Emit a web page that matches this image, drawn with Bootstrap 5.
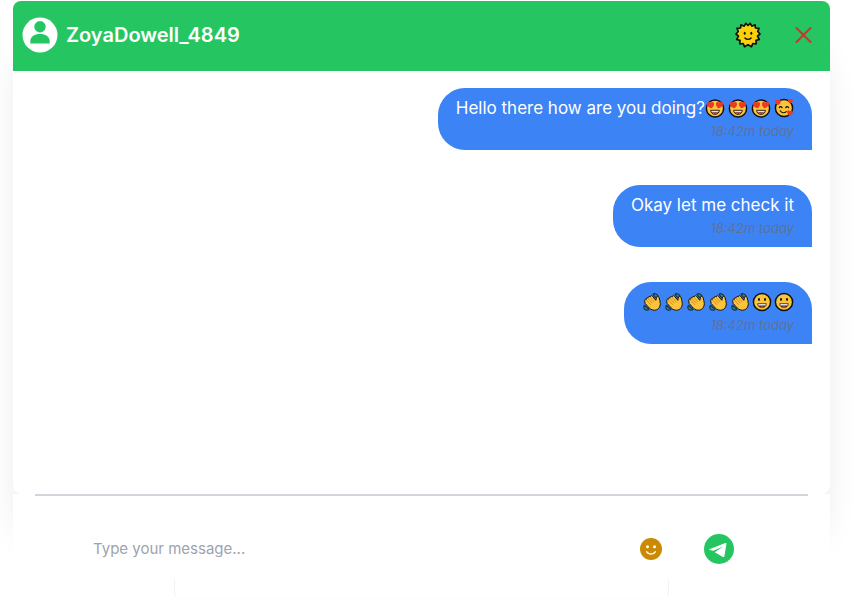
<!DOCTYPE html>
<html lang="en">
<head>
<meta charset="utf-8">
<meta name="viewport" content="width=device-width, initial-scale=1">
<title>Chat</title>
<link href="https://cdn.jsdelivr.net/npm/bootstrap@5.3.0/dist/css/bootstrap.min.css" rel="stylesheet">
<style>
body { font-family: Inter, sans-serif; background: #fff; }
svg { display: block; flex: none; }
.page-wrap { padding: 1px 23px 0 13px; }
.chat-card { border-radius: 8px; box-shadow: 0 48px 36px -14px rgba(0,0,0,.17); background: #fff; }
.chat-head { background: #25c661; height: 70px; padding: 0 18px 2px 9px; border-radius: 8px 8px 0 0; }
.chat-name { font-size: 20px; line-height: 28px; font-weight: 600; color: #fff; }
.icon-btn { background: none; border: 0; padding: 0; }
.head-tools { gap: 34px; }
.messages { min-height: 423px; padding: 17px 18px; gap: 35px; }
.bubble { background: #3c83f6; color: #fff; border-radius: 27px 27px 0 27px; padding: 6px 18px 9px; }
.bubble-text { font-size: 17px; line-height: 28px; min-height: 28px; }
.bubble-time { font-size: 13px; line-height: 19px; font-style: italic; color: #5d7399; }
.faces { gap: 3px; }
.hands { gap: 2px; }
.composer { position: relative; background: #fff; padding: 0 22px; }
.composer-row { border-top: 2px solid #d1d5db; min-height: 86px; padding: 22px 74px 0 58px; }
.composer-input { border: 0; outline: 0; background: transparent; font-size: 15px; line-height: 24px; padding: 0; min-width: 0; }
.composer-input::placeholder { color: #9ca3af; opacity: 1; }
.composer-tools { gap: 42px; }
.lower-panel { position: relative; background: #fff; width: 495px; max-width: 80%; height: 19px; margin-left: 161px; border: 1px solid #f2f2f2; border-top: 0; border-bottom-color: #fcfcfc; border-radius: 0 0 6px 6px; }
</style>
<script src="https://cdn.jsdelivr.net/npm/bootstrap@5.3.0/dist/js/bootstrap.bundle.min.js"></script>
</head>
<body>
<svg width="0" height="0" class="position-absolute" aria-hidden="true">
  <defs>
    <symbol id="love" viewBox="0 0 20 20">
      <circle cx="10" cy="10.500" r="8.600" fill="#fcc43a" stroke="#111" stroke-width="1.500"/>
      <path d="M6.300 10.300C3.200 9.200 1.400 6.800 2 4.900c.6-1.500 2.600-1.400 3.400.1 1.100-1.500 3.300-1.200 3.600.5.300 1.800-.8 3.900-2.700 4.800z" fill="#ea3b22"/>
      <path d="M13.700 10.300c3.100-1.100 4.900-3.500 4.300-5.400-.6-1.500-2.600-1.400-3.400.1-1.100-1.500-3.300-1.200-3.600.5-.3 1.800.8 3.900 2.700 4.800z" fill="#ea3b22"/>
      <path d="M5.600 12.300h8.800c-.2 2.400-1.900 4.100-4.400 4.100s-4.200-1.700-4.400-4.100z" fill="#e8e0dc" stroke="#3a2418" stroke-width="1"/><path d="M6.700 14.300h6.600c-1.400 2-5.200 2-6.600 0z" fill="#7b3026"/>
    </symbol>
    <symbol id="adore" viewBox="0 0 20 20">
      <circle cx="10" cy="10" r="8.600" fill="#fcc43a" stroke="#111" stroke-width="1.500"/>
      <path d="M5.200 9.700c.6-1.400 2.300-1.400 2.900 0M11.700 9.700c.6-1.400 2.300-1.400 2.900 0M6.200 12.800c1.400 2.300 4.200 2.600 6.100.8" fill="none" stroke="#111" stroke-width="1.200" stroke-linecap="round"/>
      <path d="M3.800 7C1.600 5.800.2 3.700 1.200 2.400c.8-1 2-.8 2.600.2.900-1.200 2.600-.9 2.900.3.300 1.600-1.200 3.400-2.900 4.100zM16.500 5.200c-1.900-.8-3-2.300-2.400-3.500.5-1 1.700-.9 2.300.1.700-1.100 2.200-.9 2.500.2.300 1.300-.9 2.700-2.400 3.200zM15.700 17.500c-2.200-1.100-3.200-3.200-2.400-4.500.6-1 1.900-.8 2.500.3.800-1.200 2.600-.9 2.900.4.200 1.600-1.300 3.100-3 3.800z" fill="#ea3b22"/>
    </symbol>
    <symbol id="grin" viewBox="0 0 20 20">
      <circle cx="10" cy="10" r="8.600" fill="#fcc43a" stroke="#111" stroke-width="1.500"/>
      <ellipse cx="7" cy="7.500" rx="1" ry="1.400" fill="#111"/><ellipse cx="13" cy="7.500" rx="1" ry="1.400" fill="#111"/>
      <path d="M5.700 11.700h8.600c-.2 2.500-1.900 4-4.300 4s-4.100-1.500-4.300-4z" fill="#fff" stroke="#222" stroke-width=".8"/><path d="M6.200 13.600h7.600c-1.300 2.600-6.300 2.600-7.600 0z" fill="#222"/><path d="M8 15c1.200-1 2.800-1 4 0-1 .7-3 .7-4 0z" fill="#ea5a47"/>
    </symbol>
    <symbol id="wave" viewBox="0 0 20 20">
      <path d="M11 2.300c1.700-1.300 4.200-.2 5.200 2.200l.4 2.200-3.300-1.400zM2.500 13.300c-1.300 1.500-.8 4.200 1.600 4.800 1.100.3 2.100 0 2.900-.7l-3-2.700z" fill="#3b8396" stroke="#17333f" stroke-width="1.200" stroke-linejoin="round"/>
      <path d="M2.800 9c-.7-1.100.5-2.200 1.500-1.400-.6-1.300.8-2.400 1.800-1.500-.3-1.400 1.100-2.200 2.100-1.200 0-1.300 1.500-1.700 2.300-.6l3.300 4c.7-1 .3-2.300.7-3.300.6-1.100 2.200-.9 2.500.5.400 2 1.300 3.600 1.300 6 0 3.900-2.300 6.700-6 6.700-2.800 0-4.700-1.500-6.200-3.500L3 11.300z" fill="#fcc43a" stroke="#111" stroke-width="1" stroke-linejoin="round"/>
      <path d="M4.500 8l4 4.500M6.200 6.600l4 4.400M8.300 5.500l3.700 4.200" fill="none" stroke="#c07a20" stroke-width=".7" stroke-linecap="round"/>
    </symbol>
  </defs>
</svg>
<div class="page-wrap">
  <main class="chat-card">
    <header class="chat-head d-flex align-items-center justify-content-between">
      <div class="d-flex align-items-center gap-2">
        <svg width="36" height="36" viewBox="0 0 36 36" aria-hidden="true"><circle cx="18" cy="18" r="17.500" fill="#fff"/><circle cx="18" cy="9.700" r="5.700" fill="#25c661"/><path d="M8.300 26.500v-2c0-5 4-7.500 9.700-7.500s9.700 2.500 9.700 7.500v2z" fill="#25c661"/></svg>
        <h1 class="chat-name mb-0">ZoyaDowell_4849</h1>
      </div>
      <div class="head-tools d-flex align-items-center">
        <button type="button" class="icon-btn" aria-label="Light theme">
          <svg width="26" height="26" viewBox="0 0 26 26"><path d="M13 3.500L15.200 1.300 16.800 4.200 20.100 2.800 20.400 6 24 6.400 22.700 9.500 25 12 22.500 14.200 24.300 17.500 21 18.400 21.200 22 17.800 21.500 16.500 24.800 13 22.600 9.500 24.800 8.200 21.500 4.800 22 5 18.400 1.700 17.500 3.500 14.200 1 12 3.300 9.500 2 6.400 5.600 6 5.900 2.800 9.200 4.200 10.800 1.300z" fill="#fad40a" stroke="#111" stroke-width="1.700" stroke-linejoin="round"/><circle cx="13" cy="13" r="7.200" fill="#fdcf0a"/><ellipse cx="9.700" cy="11.300" rx="1" ry="1.500" fill="#111"/><ellipse cx="16.300" cy="11.300" rx="1" ry="1.500" fill="#111"/><path d="M9.900 16c1.600 1.800 4.600 1.800 6.200 0" fill="none" stroke="#111" stroke-width="1.400" stroke-linecap="round"/></svg>
        </button>
        <button type="button" class="icon-btn" aria-label="Close chat">
          <svg width="17" height="18" viewBox="0 0 17 18"><path d="M1.500 2l14 14M15.500 2l-14 14" stroke="#c0392b" stroke-width="2" stroke-linecap="round"/></svg>
        </button>
      </div>
    </header>
    <section class="messages d-flex flex-column align-items-end">
      <article class="bubble">
        <div class="bubble-text d-flex align-items-center">Hello there how are you doing?
          <span class="faces d-flex" role="img" aria-label="Heart-eyed faces"><svg width="20" height="20"><use href="#love"/></svg><svg width="20" height="20"><use href="#love"/></svg><svg width="20" height="20"><use href="#love"/></svg><svg width="20" height="20"><use href="#adore"/></svg></span>
        </div>
        <div class="bubble-time text-end">18:42m today</div>
      </article>
      <article class="bubble">
        <div class="bubble-text">Okay let me check it</div>
        <div class="bubble-time text-end">18:42m today</div>
      </article>
      <article class="bubble">
        <div class="bubble-text hands d-flex align-items-center" role="img" aria-label="Waving hands and grinning faces"><svg width="20" height="20"><use href="#wave"/></svg><svg width="20" height="20"><use href="#wave"/></svg><svg width="20" height="20"><use href="#wave"/></svg><svg width="20" height="20"><use href="#wave"/></svg><svg width="20" height="20"><use href="#wave"/></svg><svg width="20" height="20"><use href="#grin"/></svg><svg width="20" height="20"><use href="#grin"/></svg></div>
        <div class="bubble-time text-end">18:42m today</div>
      </article>
    </section>
  </main>
  <form class="composer">
    <div class="composer-row d-flex align-items-center">
      <input class="composer-input flex-grow-1" type="text" placeholder="Type your message..." aria-label="Type your message">
      <div class="composer-tools d-flex align-items-center">
        <button type="button" class="icon-btn" aria-label="Add emoji">
          <svg width="22" height="22" viewBox="0 0 22 22"><circle cx="11" cy="11" r="11" fill="#ca8a04"/><circle cx="7.500" cy="8.800" r="1.500" fill="#fff"/><circle cx="14.500" cy="8.800" r="1.500" fill="#fff"/><path d="M6.500 13.700c2 3.300 7 3.300 9 0" fill="none" stroke="#fff" stroke-width="1.300" stroke-linecap="round"/></svg>
        </button>
        <button type="button" class="icon-btn" aria-label="Send">
          <svg width="30" height="30" viewBox="0 0 30 30"><circle cx="15" cy="15" r="15" fill="#25c661"/><path d="M6 14.900L21.300 9c.7-.3 1.300.1 1.100 1l-2 12.200c-.2.900-.8 1.100-1.500.7l-8.200-4.600 8.200-5.600-9.700 4.100L6 16.100c-.9-.3-.9-.9 0-1.200z" fill="#fff"/></svg>
        </button>
      </div>
    </div>
  </form>
  <div class="lower-panel"></div>
</div>
</body>
</html>
